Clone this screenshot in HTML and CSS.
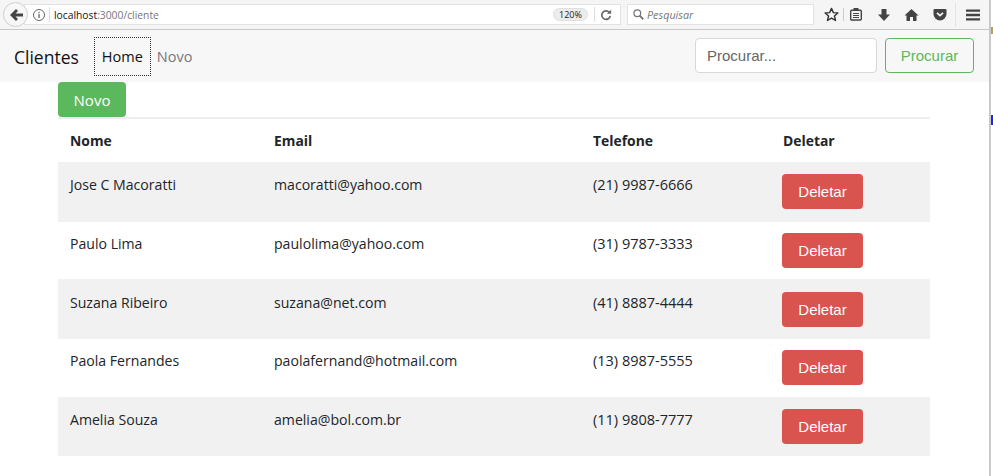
FILE: index.html
```html
<!DOCTYPE html>
<html lang="pt">
<head>
<meta charset="utf-8">
<title>Clientes</title>
<link rel="stylesheet" href="styles.css">
</head>
<body>
<header class="toolbar">
  <button class="back" aria-label="Voltar">
    <svg width="16" height="16" viewBox="0 0 16 16"><path d="M8 2 L2 8 L8 14 L10 12 L7.5 9.5 H15 V6.5 H7.5 L10 4 Z" fill="#444"/></svg>
  </button>
  <div class="urlbar">
    <svg class="info" width="14" height="14" viewBox="0 0 14 14"><circle cx="7" cy="7" r="5.5" fill="none" stroke="#666"/><rect x="6.4" y="6" width="1.3" height="4" fill="#666"/><rect x="6.4" y="3.8" width="1.3" height="1.3" fill="#666"/></svg>
    <span class="sep"></span>
    <span class="url"><span class="host">localhost</span>:3000/cliente</span>
    <span class="zoom">120%</span>
    <span class="sep sep-reload"></span>
    <svg class="reload" width="12" height="12" viewBox="0 0 14 14"><path d="M11 4 A5 5 0 1 0 12 8" fill="none" stroke="#666" stroke-width="2"/><path d="M8 5.5 H13 V0.8 Z" fill="#666"/></svg>
  </div>
  <div class="searchbar">
    <svg width="11" height="11" viewBox="0 0 14 14"><circle cx="5.5" cy="5.5" r="4.3" fill="none" stroke="#777" stroke-width="1.6"/><path d="M8.5 8.5 L13 13" stroke="#777" stroke-width="2.4"/></svg>
    <span>Pesquisar</span>
  </div>
  <div class="tools">
    <svg width="15" height="15" viewBox="0 0 16 16"><path d="M8 1.5 L10 6 L14.8 6.4 L11.1 9.6 L12.3 14.4 L8 11.8 L3.7 14.4 L4.9 9.6 L1.2 6.4 L6 6 Z" fill="none" stroke="#333" stroke-width="1.5" stroke-linejoin="round"/></svg>
    <span class="tool-sep"></span>
    <svg class="t-clip" width="14" height="15" viewBox="0 0 14 15"><rect x="1.7" y="3.2" width="10.6" height="9.8" rx="1" fill="none" stroke="#444" stroke-width="1.4"/><rect x="4.5" y="1" width="5" height="3" fill="#444"/><path d="M4 6.5 H10 M4 8.5 H10 M4 10.5 H10" stroke="#444"/></svg>
    <svg class="t-down" width="14" height="14" viewBox="0 0 14 14"><path d="M4.5 1 H9.5 V6.5 H13 L7 13 L1 6.5 H4.5 Z" fill="#444"/></svg>
    <svg class="t-home" width="15" height="14" viewBox="0 0 15 14"><path d="M7.5 1 L0.5 7.5 H2.5 V13 H6 V9 H9 V13 H12.5 V7.5 H14.5 Z" fill="#444"/></svg>
    <svg class="t-pocket" width="14" height="13" viewBox="0 0 14 13"><path d="M1.5 1 H12.5 A1 1 0 0 1 13.5 2 V6 A6.5 6.5 0 0 1 .5 6 V2 A1 1 0 0 1 1.5 1 Z" fill="#444"/><path d="M4 4.8 L7 7.6 L10 4.8" fill="none" stroke="#f5f5f5" stroke-width="1.8"/></svg>
    <span class="tool-sep tool-sep-menu"></span>
    <svg class="t-menu" width="14" height="12" viewBox="0 0 14 12"><path d="M0 0.5 H14 V2.8 H0 Z M0 4.8 H14 V7.2 H0 Z M0 9.2 H14 V11.5 H0 Z" fill="#444"/></svg>
  </div>
</header>

<div class="page">
  <nav class="navbar">
    <a class="brand">Clientes</a>
    <a class="nav-link active">Home</a>
    <a class="nav-link">Novo</a>
    <form class="search">
      <input class="search-input" placeholder="Procurar...">
      <button class="btn btn-outline" type="button">Procurar</button>
    </form>
  </nav>
  <main class="container">
    <button class="btn btn-success">Novo</button>
    <table class="table">
      <thead>
        <tr><th class="c1">Nome</th><th class="c2">Email</th><th class="c3">Telefone</th><th>Deletar</th></tr>
      </thead>
      <tbody>
        <tr><td>Jose C Macoratti</td><td>macoratti@yahoo.com</td><td class="phone">(21) 9987-6666</td><td><button class="btn btn-danger">Deletar</button></td></tr>
        <tr><td>Paulo Lima</td><td>paulolima@yahoo.com</td><td class="phone">(31) 9787-3333</td><td><button class="btn btn-danger">Deletar</button></td></tr>
        <tr><td>Suzana Ribeiro</td><td>suzana@net.com</td><td class="phone">(41) 8887-4444</td><td><button class="btn btn-danger">Deletar</button></td></tr>
        <tr><td>Paola Fernandes</td><td>paolafernand@hotmail.com</td><td class="phone">(13) 8987-5555</td><td><button class="btn btn-danger">Deletar</button></td></tr>
        <tr><td>Amelia Souza</td><td>amelia@bol.com.br</td><td class="phone">(11) 9808-7777</td><td><button class="btn btn-danger">Deletar</button></td></tr>
      </tbody>
    </table>
  </main>
</div>
<span class="edge-mark edge-yellow"></span>
<span class="edge-mark edge-blue"></span>
</body>
</html>
```
FILE: styles.css
```css
* { box-sizing: border-box; }
html, body { margin: 0; padding: 0; }
html { background: #fff; overflow: hidden; }
body {
  width: 991px;
  height: 476px;
  background: #fff;
  border-right: 2px solid #c9c9c9;
  color: #212529;
  font-family: "Open Sans", "Noto Sans", sans-serif;
  font-size: 14.1px;
}

/* stray pixels at the window's right edge */
.edge-mark { position: absolute; left: 991px; width: 2px; }
.edge-yellow { top: 27px; height: 7px; background: #b9a24a; }
.edge-blue { top: 115px; height: 10px; background: #2222ee; }

/* browser chrome */
.toolbar {
  display: flex;
  align-items: center;
  height: 30px;
  padding-left: 3px;
  background: #f5f5f5;
  border-bottom: 1px solid #c8c8c8;
}
.back {
  display: flex;
  align-items: center;
  justify-content: center;
  flex: none;
  width: 25px;
  height: 25px;
  padding: 0;
  margin-right: -4px;
  position: relative;
  z-index: 1;
  background: #f7f7f7;
  border: 1px solid #cfcfcf;
  border-radius: 50%;
}
.urlbar {
  display: flex;
  align-items: center;
  flex: none;
  width: 597px;
  height: 21px;
  padding-left: 7px;
  background: #fff;
  border: 1px solid #e3e3e3;
  font-size: 10.3px;
}
.sep { width: 1px; height: 15px; background: #ddd; margin: 0 4px 0 3px; }
.url { color: #777; flex: 1; }
.host { color: #111; }
.zoom {
  width: 35px;
  height: 13px;
  margin-right: 6px;
  border-radius: 7px;
  background: #ececec;
  border: 1px solid #e0e0e0;
  color: #222;
  font-size: 9px;
  line-height: 11px;
  text-align: center;
}
.sep-reload { margin: 0 5px 0 0; }
.reload { margin-right: 8px; }
.searchbar {
  display: flex;
  align-items: center;
  gap: 3px;
  flex: none;
  width: 187px;
  height: 21px;
  margin-left: 6px;
  padding-left: 5px;
  background: #fff;
  border: 1px solid #e3e3e3;
  color: #777;
  font-size: 10.8px;
  font-style: italic;
}
.tools {
  display: flex;
  align-items: center;
  padding-left: 10px;
}
.tool-sep { width: 1px; height: 13px; margin: 0 5px 0 4px; background: #ccc; }
.t-down { margin-left: 14px; }
.t-home { margin-left: 13px; }
.t-pocket { margin-left: 14px; }
.tool-sep-menu { height: 24px; margin: 0 10px 0 8px; background: #e4e4e4; }

/* page */
.navbar {
  display: flex;
  align-items: center;
  height: 52px;
  padding: 0 15px 0 14px;
  background: #f7f7f7;
}
.brand { font-size: 17.5px; color: #111; margin: 1px 16px 0 0; }
.nav-link { margin-top: 1px; font-size: 14.5px; color: #777; padding: 0 4px; line-height: 37px; }
.nav-link.active {
  color: #111;
  width: 55px;
  padding: 0;
  margin-right: 3px;
  text-align: center;
  outline: 1px dotted #333;
}
.search { display: flex; margin: 0 0 1px auto; gap: 8px; }
.search-input {
  width: 182px;
  height: 35px;
  padding: 0 11px;
  border: 1px solid #d8d8d8;
  border-radius: 4px;
  font-family: "Liberation Sans", sans-serif;
  font-size: 15px;
  background: #fff;
}
.search-input::placeholder { color: #666; opacity: 1; }
.btn {
  height: 35px;
  padding: 0;
  border: 1px solid transparent;
  border-radius: 4px;
  font-family: "Liberation Sans", sans-serif;
  font-size: 15px;
}
.btn-outline { width: 89px; color: #5cb85c; background: transparent; border-color: #5cb85c; }
.container { padding-left: 58px; width: 930px; }
.btn-success { display: block; width: 68px; background: #5cb85c; color: #fff; font-family: "Open Sans", sans-serif; }
.table { width: 872px; border-spacing: 0; table-layout: fixed; }
.c1 { width: 204px; }
.c2 { width: 319px; }
.c3 { width: 190px; }
th {
  height: 45px;
  padding: 0 12px;
  border-top: 2px solid #eceeef;
  text-align: left;
  font-weight: 700;
  font-size: 13.9px;
  color: #212529;
}
td { height: 60px; padding: 12px 12px 0; vertical-align: top; line-height: 22px; }
.phone { font-size: 14.5px; }
tbody tr:nth-child(odd) { background: #f1f1f1; }
tbody tr:nth-child(2) td { height: 57px; padding-top: 11px; }
tbody tr:nth-child(3) td { padding-top: 13px; }
tbody tr:nth-child(4) td { height: 58px; padding-top: 11px; }
tbody tr:nth-child(5) td { height: 59px; }
td:last-child { padding-left: 11px; }
.btn-danger { display: block; width: 81px; background: #d9534f; color: #fff; }
```
